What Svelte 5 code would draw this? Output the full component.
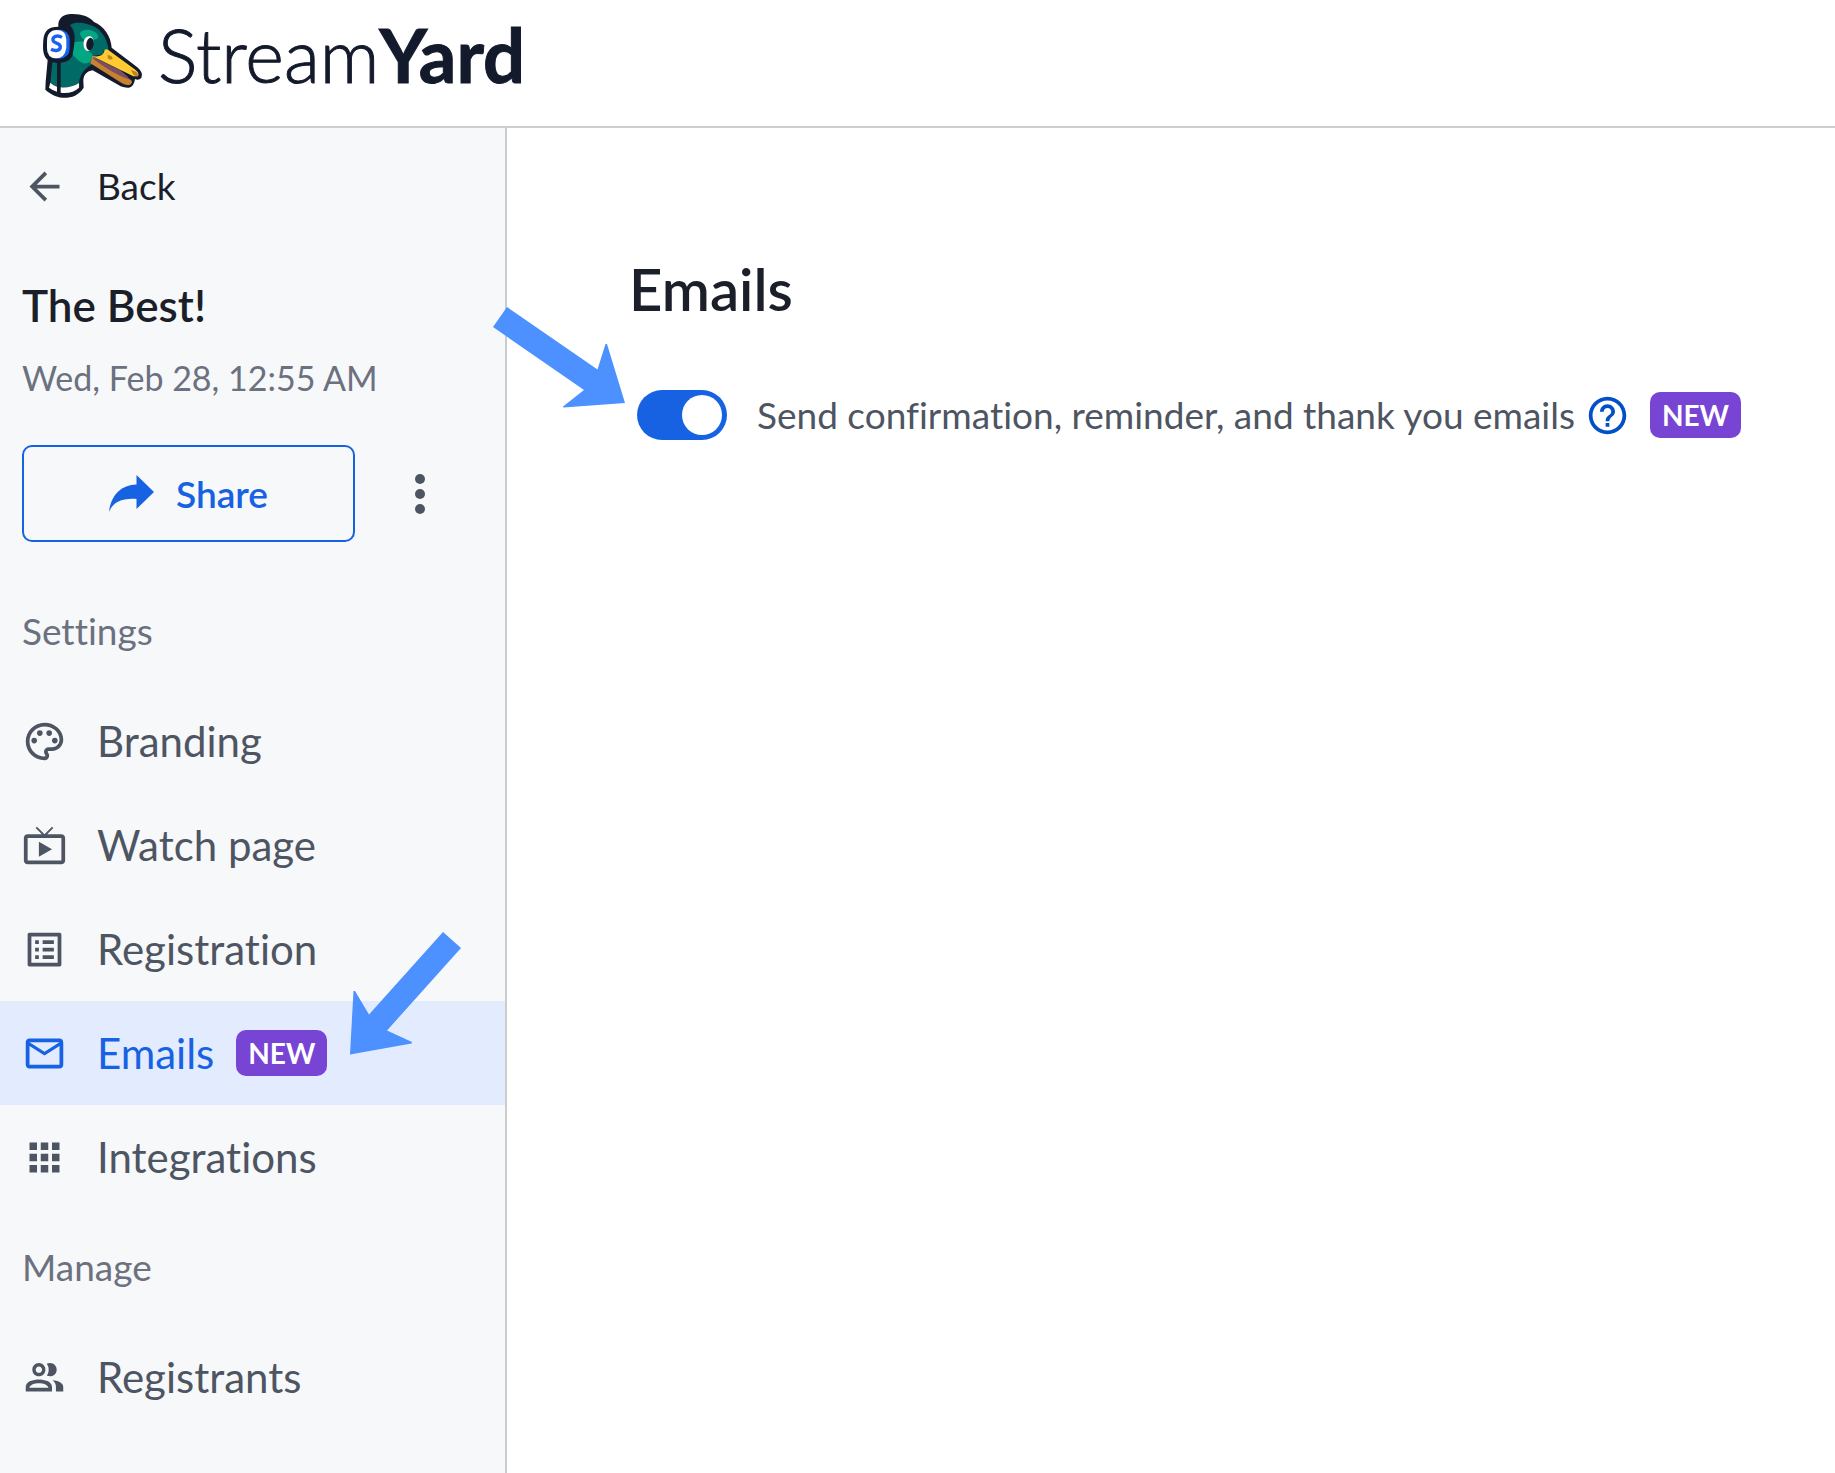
<script lang="ts">
  const settings = [
    { label: 'Branding', icon: 'palette' },
    { label: 'Watch page', icon: 'tv' },
    { label: 'Registration', icon: 'list' },
    { label: 'Emails', icon: 'mail', active: true, isNew: true },
    { label: 'Integrations', icon: 'apps' },
  ];
  const manage = [{ label: 'Registrants', icon: 'people' }];

  const icons: Record<string, string> = {
    back: 'M20 11H7.83l5.59-5.59L12 4l-8 8 8 8 1.41-1.41L7.83 13H20v-2z',
    palette:
      'M12 22C6.49 22 2 17.51 2 12S6.49 2 12 2s10 4.04 10 9c0 3.31-2.69 6-6 6h-1.77c-.28 0-.5.22-.5.5 0 .12.05.23.13.33.41.47.64 1.06.64 1.67A2.5 2.5 0 0 1 12 22zm0-18c-4.41 0-8 3.59-8 8s3.59 8 8 8c.28 0 .5-.22.5-.5a.54.54 0 0 0-.14-.35c-.41-.46-.63-1.05-.63-1.65a2.5 2.5 0 0 1 2.5-2.5H16c2.21 0 4-1.79 4-4 0-3.86-3.59-7-8-7zM5 11.5a1.5 1.5 0 1 0 3 0a1.5 1.5 0 1 0-3 0zM8 7.5a1.5 1.5 0 1 0 3 0a1.5 1.5 0 1 0-3 0zM13 7.5a1.5 1.5 0 1 0 3 0a1.5 1.5 0 1 0-3 0zM16 11.5a1.5 1.5 0 1 0 3 0a1.5 1.5 0 1 0-3 0z',
    tv: 'M21 6h-7.59l3.29-3.29L16 2l-4 4-4-4-.71.71L10.59 6H3c-1.1 0-2 .89-2 2v12c0 1.1.9 2 2 2h18c1.1 0 2-.9 2-2V8c0-1.11-.9-2-2-2zm0 14H3V8h18v12zM9 10v8l7-4z',
    list: 'M19 5v14H5V5h14m1.1-2H3.9c-.5 0-.9.4-.9.9v16.2c0 .4.4.9.9.9h16.2c.4 0 .9-.5.9-.9V3.9c0-.5-.5-.9-.9-.9zM11 7h6v2h-6V7zm0 4h6v2h-6v-2zm0 4h6v2h-6zM7 7h2v2H7zm0 4h2v2H7zm0 4h2v2H7z',
    mail: 'M22 6c0-1.1-.9-2-2-2H4c-1.1 0-2 .9-2 2v12c0 1.1.9 2 2 2h16c1.1 0 2-.9 2-2V6zm-2 0l-8 5-8-5h16zm0 12H4V8l8 5 8-5v10z',
    apps: 'M4 8h4V4H4v4zm6 12h4v-4h-4v4zm-6 0h4v-4H4v4zm0-6h4v-4H4v4zm6 0h4v-4h-4v4zm6-10v4h4V4h-4zm-6 4h4V4h-4v4zm6 6h4v-4h-4v4zm0 6h4v-4h-4v4z',
    people:
      'M9 13.1c-2.9 0-7 1-7 3.9v2.5h14V17c0-2.900-4.100-3.900-7-3.900zM3.900 17.400c.5-1.500 2.800-2.300 5.100-2.300s4.600.8 5.100 2.300zM9 11.300c1.930 0 3.500-1.570 3.500-3.500S10.930 4.300 9 4.300 5.500 5.870 5.500 7.800 7.070 11.300 9 11.300zm0-5.200c.94 0 1.700.76 1.700 1.700S9.940 9.500 9 9.500s-1.700-.76-1.700-1.700S8.060 6.100 9 6.100zm7.200 7.400c1.200.8 1.900 2 1.900 3.500v2.500H22V17c0-2.200-3.200-3.400-5.800-3.500zM15 11.300c1.930 0 3.500-1.570 3.500-3.500S16.930 4.300 15 4.300c-.7 0-1.200.1-1.800.4.9 1.500 1 1.900 1 3.100s-.1 1.800-1 3.100c.5.3 1.100.4 1.800.4z',
    help: 'M11 18h2v-2h-2v2zm1-16C6.48 2 2 6.48 2 12s4.48 10 10 10 10-4.48 10-10S17.52 2 12 2zm0 18c-4.41 0-8-3.59-8-8s3.59-8 8-8 8 3.59 8 8-3.59 8-8 8zm0-14c-2.21 0-4 1.79-4 4h2c0-1.1.9-2 2-2s2 .9 2 2c0 2-3 1.75-3 5h2c0-2.25 3-2.5 3-5 0-2.21-1.79-4-4-4z',
  };

  let sendEmails = $state(true);
</script>

{#snippet icon(name: string)}
  <svg class="icon" viewBox="0 0 24 24" aria-hidden="true"><path fill-rule="evenodd" d={icons[name]} /></svg>
{/snippet}

{#snippet navList(items: any[])}
  <ul>
    {#each items as item}
      <li>
        <a href="#{item.icon}" class:active={item.active} aria-current={item.active ? 'page' : undefined}>
          {@render icon(item.icon)}
          <span>{item.label}</span>
          {#if item.isNew}<span class="badge">NEW</span>{/if}
        </a>
        {#if item.active}
          <svg class="pointer nav-pointer" viewBox="0 0 112 124" aria-hidden="true">
            <path d="M93 1 111 17 37 99.500 62 111 61.500 112.500 0 123.500 3.500 60H5L19 83.500z" />
          </svg>
        {/if}
      </li>
    {/each}
  </ul>
{/snippet}

<div class="page">
  <header>
    <a class="logo" href="#home" aria-label="StreamYard">
      <svg class="duck" viewBox="36 36 306 261" aria-hidden="true">
        <path fill="#131a2c" d="M85 80C83 58 97 42 124 42C153 41 180 50 192 66C221 78 243 108 245 143L322 202Q341 218 334 234Q326 242 315 237Q312 260 297 263Q284 264 272 259L188 211C172 213 160 224 160 242L161 263C145 288 123 294 98 293C76 291 59 281 46 269L47 245L53 180C38 168 38 145 40 120C42 93 55 80 85 80z" />
        <path fill="#006a66" d="M120 75C133 66 154 68 171 72C207 79 231 108 236 151L221 151L220 163L190 168L186 193C163 207 150 223 147 249Q122 265 92 261V188Q128 185 132 149L134 111Q133 91 120 75zM67 187L81 189V259Q70 256 61 248z" />
        <path fill="#04a783" d="M150 100C155 86 181 85 199 99C211 111 203 120 188 119L163 119Q151 113 150 100zM134 126L159 124Q162 150 183 158L188 166L180 187Q158 197 141 177L128 164z" />
        <path fill="#fff" d="M61 248Q70 257 81 260V275Q69 272 57 263zM92 262Q124 264 147 249Q148 257 147 263Q127 282 92 278z" />
        <rect x="51" y="89" width="68" height="87" rx="30" fill="#1864ee" />
        <path fill="#fff" d="M51 125Q52 90 80 90Q109 90 109 119V144Q104 175 78 175Q51 174 51 143z" />
        <path fill="none" stroke="#1864ee" stroke-width="10" d="M96 112C82 104 67 109 69 121C71 132 90 127 91 140C91 153 75 154 63 148" />
        <path fill="#fff" d="M161 137C158 118 170 106 181 109Q191 112 190 126Q187 151 174 153Q162 150 161 137z" />
        <ellipse cx="180" cy="132" rx="11" ry="19" fill="#131a2c" transform="rotate(8 180 132)" />
        <path fill="#c8822f" d="M187 168Q244 205 303 240Q310 248 300 254Q288 257 276 250L181 190z" />
        <path fill="#795061" d="M190 171L271 211L292 229L300 239Q255 226 190 177z" />
        <path fill="#ffcb31" d="M224 149Q232 146 239 153L313 207Q330 219 324 229L310 229L186 168Q216 173 222 157z" />
        <path fill="#bd8220" d="M233 164Q248 167 248 177Q237 182 233 173zM302 209L318 215Q329 225 320 229L311 225z" />
      </svg>
      <span class="wordmark">Stream<b>Yard</b></span>
    </a>
  </header>

  <div class="body">
    <aside>
      <a class="back" href="#back">{@render icon('back')}<span>Back</span></a>
      <h2>The Best!</h2>
      <p class="date">Wed, Feb 28, 12:55 AM</p>
      <div class="actions">
        <button class="share" type="button">
          <svg class="share-icon" viewBox="0 0 45 37" aria-hidden="true"><path d="M0 37C2 20 12 10 27.500 9.500V0L45 17 27.500 34V24C13 23 4 27 0 37z" /></svg>
          <span>Share</span>
        </button>
        <button class="more" type="button" aria-label="More options">
          <svg viewBox="0 0 10 40" aria-hidden="true"><circle cx="5" cy="5" r="5" /><circle cx="5" cy="20" r="5" /><circle cx="5" cy="35" r="5" /></svg>
        </button>
      </div>
      <nav aria-label="Webinar">
        <h3>Settings</h3>
        {@render navList(settings)}
        <h3>Manage</h3>
        {@render navList(manage)}
      </nav>
    </aside>

    <main>
      <h1>Emails</h1>
      <div class="setting">
        <svg class="pointer toggle-pointer" viewBox="0 0 132 101" aria-hidden="true">
          <path d="M14 0 104.500 62.500 112.500 37H114L132 96 70.500 100.500 70 99.500 91 83 0 20z" />
        </svg>
        <input id="send-emails" type="checkbox" role="switch" bind:checked={sendEmails} />
        <label for="send-emails">Send confirmation, reminder, and thank you emails</label>
        <button class="help" type="button" aria-label="Help">{@render icon('help')}</button>
        <span class="badge">NEW</span>
      </div>
    </main>
  </div>
</div>

<style>
  :global(body) {
    margin: 0;
  }
  .page {
    display: flex;
    flex-direction: column;
    min-height: 100vh;
    background: #fff;
    color: #4e5562;
    font-family: Lato, 'Open Sans', sans-serif;
    font-size: 37px;
    font-variant-ligatures: none;
    line-height: 40px;
  }
  h1, h2, h3, p, ul {
    margin: 0;
    padding: 0;
  }
  ul {
    list-style: none;
  }
  a {
    color: inherit;
    text-decoration: none;
  }
  button {
    padding: 0;
    border: 0;
    background: none;
    color: inherit;
    font: inherit;
    cursor: pointer;
  }
  svg {
    display: block;
    flex: none;
  }
  .icon {
    width: 45px;
    height: 45px;
    fill: currentColor;
  }
  header {
    display: flex;
    height: 126px;
    padding-left: 42px;
    border-bottom: 2px solid #cfcfd0;
  }
  .logo {
    display: flex;
    align-items: center;
    gap: 14px;
    height: 110px;
    color: #131a2c;
  }
  .duck {
    width: 102px;
    height: 87px;
  }
  .wordmark {
    font-size: 74px;
    font-weight: 300;
    line-height: 88px;
    -webkit-text-stroke: 1px currentColor;
  }
  .wordmark b {
    font-weight: 700;
  }
  .body {
    display: flex;
    flex: 1;
  }
  aside {
    flex: 0 0 505px;
    border-right: 2px solid #cbccd0;
    background: #f7f8fa;
  }
  .back {
    display: flex;
    align-items: center;
    gap: 30px;
    height: 116px;
    padding-left: 22px;
  }
  .back span {
    color: #1b1f29;
  }
  h2 {
    padding: 37px 22px 0;
    color: #1b1f29;
    font-size: 44px;
    font-weight: 600;
    line-height: 48px;
  }
  .date {
    padding: 29px 22px 0;
    color: #6c7180;
    font-size: 34px;
  }
  .actions {
    display: flex;
    align-items: center;
    gap: 40px;
    padding: 47px 22px 0;
  }
  .share {
    display: flex;
    align-items: center;
    justify-content: center;
    gap: 22px;
    box-sizing: border-box;
    width: 333px;
    height: 97px;
    border: 2px solid #1662e3;
    border-radius: 10px;
    color: #1662e3;
    font-weight: 600;
  }
  .share-icon {
    width: 45px;
    height: 37px;
    fill: currentColor;
  }
  .more {
    display: flex;
    align-items: center;
    justify-content: center;
    width: 50px;
    height: 60px;
  }
  .more svg {
    width: 10px;
    height: 40px;
    fill: #4e5562;
  }
  h3 {
    padding: 69px 22px 38px;
    color: #6c7180;
    font-size: 37px;
    font-weight: 400;
  }
  ul + h3 {
    padding-top: 38px;
  }
  li {
    position: relative;
  }
  li a {
    display: flex;
    align-items: center;
    height: 104px;
    padding-left: 22px;
    font-size: 42px;
  }
  li .icon {
    margin-right: 30px;
  }
  li a.active {
    background: #e3ebff;
    color: #1662e3;
  }
  .badge {
    display: grid;
    place-items: center;
    width: 91px;
    height: 46px;
    border-radius: 10px;
    background: #7844d4;
    color: #fff;
    font-size: 28px;
    font-weight: 700;
  }
  li .badge {
    margin-left: 22px;
  }
  .pointer {
    position: absolute;
    fill: #4d90ff;
  }
  .nav-pointer {
    top: -70px;
    left: 350px;
    width: 112px;
    height: 124px;
  }
  main {
    flex: 1;
    min-width: 0;
    padding: 129px 90px 0 122px;
  }
  h1 {
    color: #1b1f29;
    font-size: 58px;
    font-weight: 600;
    line-height: 64px;
  }
  .setting {
    position: relative;
    display: flex;
    align-items: center;
    margin-top: 69px;
    padding-left: 8px;
  }
  .toggle-pointer {
    top: -83px;
    left: -136px;
    width: 132px;
    height: 101px;
  }
  input {
    flex: none;
    box-sizing: border-box;
    width: 90px;
    height: 50px;
    margin: 0 30px 0 0;
    padding: 5px;
    border-radius: 25px;
    background: #8a90a0;
    appearance: none;
    cursor: pointer;
  }
  input::before {
    content: '';
    display: block;
    width: 40px;
    height: 40px;
    border-radius: 50%;
    background: #fff;
  }
  input:checked {
    background: #1662e3;
  }
  input:checked::before {
    margin-left: auto;
  }
  .help {
    margin: 0 20px 0 10px;
    color: #0050c8;
  }
</style>
